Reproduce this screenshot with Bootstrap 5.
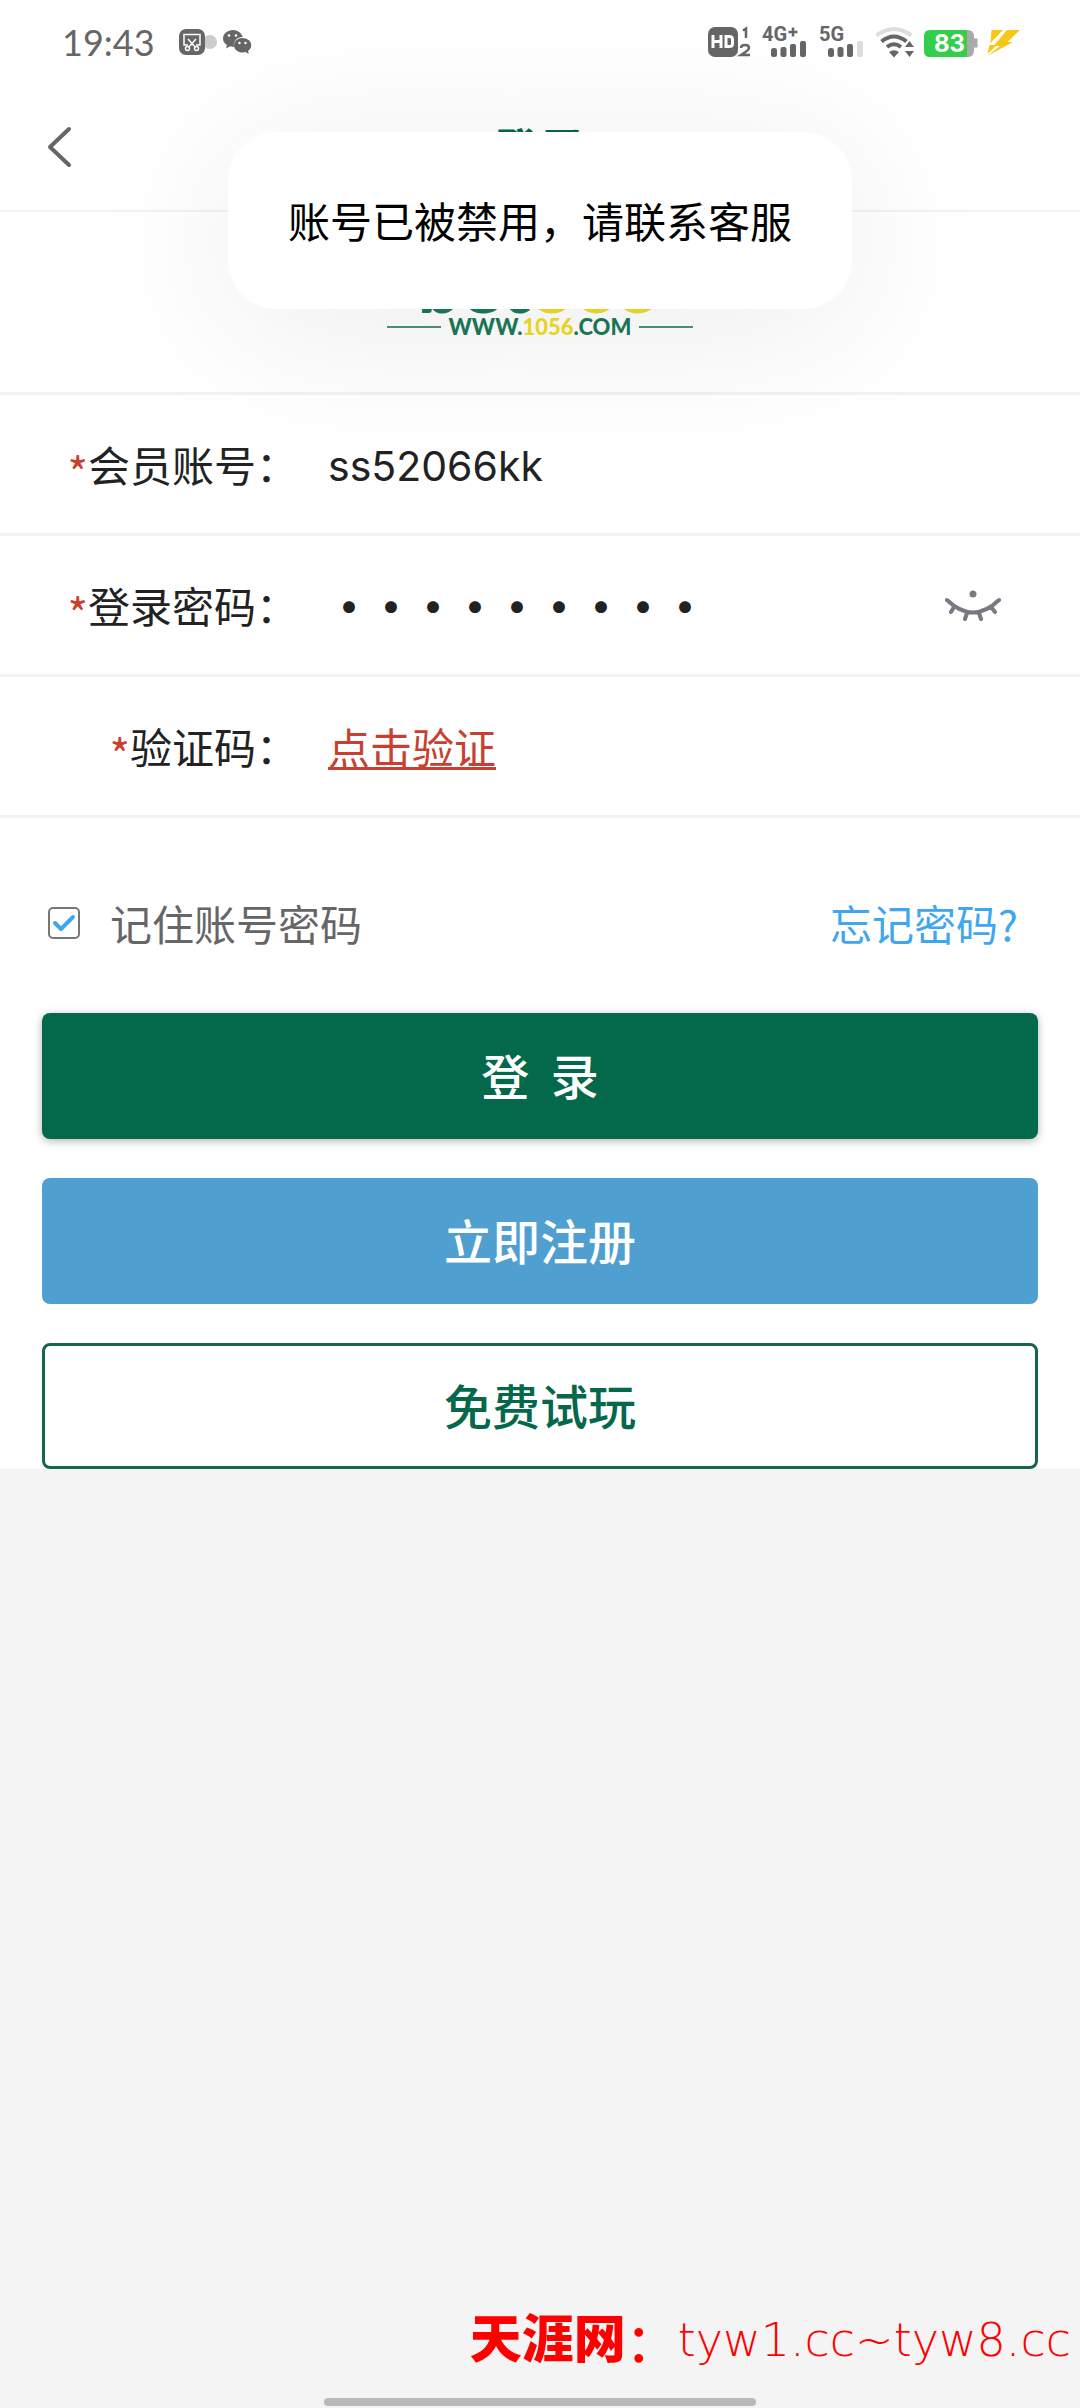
<!DOCTYPE html>
<html lang="zh-CN">
<head>
<meta charset="utf-8">
<meta name="viewport" content="width=device-width, initial-scale=1">
<title>登录</title>
<link href="https://cdn.jsdelivr.net/npm/bootstrap@5.3.0/dist/css/bootstrap.min.css" rel="stylesheet">
<style>
  :root { --brand: #04684a; --line: #f2f2f2; --muted: #666; }
  body { font-family: "Noto Sans CJK SC", sans-serif; font-size: 42px; line-height: 60px; color: #222; background: #f4f4f4; }
  .status-bar { height: 84px; padding: 0 60px 0 62px; }
  .status-left { gap: 20px; }
  .clock { font-family: Lato, sans-serif; font-size: 36px; line-height: 40px; color: var(--muted); }
  .title-bar { height: 128px; border-bottom: 2px solid var(--line); }
  .title-bar h1 { font-size: 46px; line-height: 60px; color: var(--brand); }
  .back-btn { left: 40px; top: 36px; width: 40px; height: 54px; line-height: 0; }
  .brand-block { height: 183px; border-bottom: 3px solid var(--line); font-family: Lato, sans-serif; font-weight: 900; color: #1b7a58; }
  .brand-name { font-size: 76px; line-height: 60px; padding-top: 42px; }
  .brand-url { font-size: 22px; line-height: 26px; }
  .brand-url::before, .brand-url::after { content: ""; width: 54px; height: 2px; background: #4c9478; }
  .gold { color: #f0dc28; }
  .field-row { height: 141px; border-bottom: 3px solid var(--line); }
  .field-label { width: 328px; padding-right: 30px; }
  .star { color: #c8402f; font-size: 44px; line-height: 0; vertical-align: -8px; }
  .field-input { font-size: 42px; line-height: 60px; color: #222; min-width: 0; }
  .field-input:focus { box-shadow: none; }
  .latin { font-family: Inter, sans-serif; font-size: 41px; line-height: 66px; height: 66px; margin-top: 4px; }
  .dots { font-weight: 900; }
  .verify-link { color: #c8402f; text-underline-offset: 3px; text-decoration-thickness: 3px; }
  .eye-btn { margin-right: 78px; line-height: 0; }
  .options { padding: 75px 62px 60px 48px; }
  .remember { color: var(--muted); gap: 30px; }
  .remember .form-check-input { width: 32px; height: 32px; border: 2px solid #777; border-radius: 5px; }
  .remember .form-check-input:checked { background-color: #fff; background-size: 30px 30px;
    background-image: url("data:image/svg+xml,%3csvg xmlns='http://www.w3.org/2000/svg' viewBox='0 0 30 30'%3e%3cpath fill='none' stroke='%233fa5ec' stroke-width='4' stroke-linecap='round' stroke-linejoin='round' d='m6 15 6 6 12-12'/%3e%3c/svg%3e"); }
  .forgot { color: #3fa7ee; }
  .actions { padding: 0 42px; gap: 39px; }
  .action-btn { height: 126px; font-size: 48px; line-height: 60px; font-weight: 500; border-radius: 8px; padding: 0 12px 4px; }
  .btn-login { --bs-btn-color: #fff; --bs-btn-bg: var(--brand); box-shadow: 0 2px 8px rgba(0,0,0,.3); }
  .btn-register { --bs-btn-color: #fff; --bs-btn-bg: #4fa0d0; }
  .btn-trial { --bs-btn-color: var(--brand); --bs-btn-bg: #fff; border: 3px solid #186549; }
  .notice { top: 132px; width: 624px; padding: 58px 20px 59px; border-radius: 48px; background: #fff; color: #000; box-shadow: 0 20px 160px rgba(0,0,0,.08); }
  .watermark { color: #f00; padding: 0 9px 24px 0; }
  .watermark .wm-name { font-weight: 900; font-size: 52px; padding-bottom: 8px; }
  .watermark .wm-colon { font-weight: 500; font-size: 52px; }
  .watermark .wm-url { font-family: "DejaVu Sans", sans-serif; font-weight: 200; font-size: 46px; }
  .home-bar { width: 40%; height: 8px; background: #b9b9b9; margin-bottom: 2px; }
</style>
<script src="https://cdn.jsdelivr.net/npm/bootstrap@5.3.0/dist/js/bootstrap.bundle.min.js"></script>
</head>
<body>
<div class="d-flex flex-column min-vh-100 position-relative">
  <main class="bg-white">
    <div class="status-bar d-flex align-items-center justify-content-between">
      <div class="status-left d-flex align-items-center">
        <span class="clock">19:43</span>
        <svg width="80" height="30" viewBox="0 0 80 30" aria-hidden="true">
          <circle cx="35" cy="15" r="7" fill="#ccc"/>
          <rect x="4" y="2" width="26" height="26" rx="7" fill="#666"/>
          <path d="M13 18H9V7.500H25V18H21M13 12l8 9M21 12l-8 9" fill="none" stroke="#fff" stroke-width="1.500"/>
          <circle cx="12.500" cy="21.500" r="2" fill="#666" stroke="#fff" stroke-width="1.500"/>
          <circle cx="21.500" cy="21.500" r="2" fill="#666" stroke="#fff" stroke-width="1.500"/>
          <path d="M58 3c-5.500 0-10 3.700-10 8.500 0 2.800 1.500 5 4 6.500l-1 3.500 4-2.200 4 .7c-1-6 3-10 8.700-10C66.500 6 62.600 3 58 3z" fill="#666"/>
          <path d="M67.500 11c-4.700 0-8.500 3-8.500 7.200s3.800 7.300 8.500 7.300l3-.5 3.300 2-.8-3c2-1.500 3.200-3.500 3.200-5.800 0-4.200-4-7.200-8.700-7.200z" fill="#666"/>
          <g fill="#fff"><circle cx="54" cy="8.500" r="1.300"/><circle cx="61" cy="8.500" r="1.300"/><circle cx="64.500" cy="16" r="1.200"/><circle cx="70.500" cy="16" r="1.200"/></g>
        </svg>
      </div>
      <div class="d-flex align-items-center gap-2">
        <svg width="46" height="32" viewBox="0 0 46 32" role="img" aria-label="HD 1 2">
          <rect x="0" y="1" width="30" height="30" rx="7" fill="#666"/>
          <path d="M5 9v13M13 9v13M5 15.500h8M18 10.500h3.500q3 0 3 3v4q0 3-3 3H18z" fill="none" stroke="#fff" stroke-width="3"/>
          <path d="M35 4.500 38 2.500V12M33 22q0-3 4-3t4 3q0 2-8 7h9" fill="none" stroke="#666" stroke-width="2.500"/>
        </svg>
        <svg width="49" height="44" viewBox="0 -6 49 44" font-family="Roboto, sans-serif" font-weight="700" fill="#666">
          <text x="0" y="15" font-size="20">4G</text>
          <path d="M31 1.500v9M26.500 6h9" stroke="#666" stroke-width="2.500"/>
          <rect x="9" y="22" width="6" height="9" rx="2.500"/><rect x="18.500" y="21" width="6" height="10" rx="2"/><rect x="28" y="18" width="6" height="13" rx="2"/><rect x="38" y="15" width="6" height="16" rx="2"/>
        </svg>
        <svg width="48" height="44" viewBox="0 -6 48 44" font-family="Roboto, sans-serif" font-weight="700" fill="#666">
          <text x="0" y="15" font-size="20">5G</text>
          <rect x="9" y="22" width="6" height="9" rx="2.500"/><rect x="18.500" y="21" width="6" height="10" rx="2"/><rect x="28" y="18" width="6" height="13" rx="2"/><rect x="38" y="15" width="6" height="16" rx="2" fill="#ddd"/>
        </svg>
        <svg width="41" height="32" viewBox="0 0 41 32" fill="none" stroke-width="4">
          <path d="M1.500 9.500Q19 -3.500 36.500 9.500" stroke="#ddd"/>
          <path d="M6.500 15.500Q19 5.500 31.500 15.500M12 21Q19 15.500 26 21" stroke="#666"/>
          <path d="M14 26q5-3.500 10 0l-5 5.500zM30 21l4.500-6L39 21zM30 25h9l-4.500 6z" fill="#666"/>
        </svg>
        <svg width="54" height="32" viewBox="0 0 54 32" role="img" aria-label="83%">
          <path d="M43 4h1q6 0 6 7v1.500h3.500v9H50V24q0 7-6 7h-1z" fill="#aaa"/>
          <path d="M6 4H43V31H6q-6 0-6-6V10q0-6 6-6z" fill="#33cf4b"/>
          <text x="10" y="26" font-family="Inter, sans-serif" font-size="24" font-weight="700" fill="#fff">83</text>
        </svg>
        <svg width="34" height="32" viewBox="0 0 34 32" aria-hidden="true" fill="#f8c614">
          <path d="M5.500 4H17L4.500 17z"/>
          <path d="M21 4H34L21.500 16H27L1 30 14 20H7.500z"/>
          <path d="M3.500 19H11L1.500 28z"/>
        </svg>
      </div>
    </div>

    <header class="title-bar d-flex align-items-center justify-content-center position-relative">
      <button class="back-btn btn p-0 border-0 position-absolute" type="button" aria-label="返回">
        <svg width="40" height="54" viewBox="0 0 40 54"><path d="M29 9 10 27 29 45" fill="none" stroke="#666" stroke-width="4" stroke-linecap="round" stroke-linejoin="round"/></svg>
      </button>
      <h1 class="m-0 fw-bold">登录</h1>
    </header>

    <div class="brand-block text-center">
      <div class="brand-name">bet<span class="gold">365</span></div>
      <div class="brand-url d-flex justify-content-center align-items-center gap-2"><span>WWW.<span class="gold">1056</span>.COM</span></div>
    </div>

    <form>
      <div class="field-row d-flex align-items-center">
        <label class="field-label flex-shrink-0 text-end" for="account"><span class="star">*</span>会员账号：</label>
        <input class="field-input latin form-control-plaintext p-0 flex-fill w-auto" id="account" type="text" value="ss52066kk">
      </div>
      <div class="field-row d-flex align-items-center">
        <label class="field-label flex-shrink-0 text-end" for="password"><span class="star">*</span>登录密码：</label>
        <input class="field-input dots form-control-plaintext p-0 flex-fill w-auto" id="password" type="password" value="123456789">
        <button class="eye-btn btn p-0 border-0 flex-shrink-0" type="button" aria-label="显示密码">
          <svg width="58" height="34" viewBox="0 0 58 34" fill="none" stroke="#777983" stroke-width="4" stroke-linecap="round">
            <circle cx="29" cy="6" r="3.500" fill="#777983" stroke="none"/>
            <path d="M3 12Q29 37 55 12M10 19l-3 5M23 25l-2 6M35 25l2 6M47 19l4 5"/>
          </svg>
        </button>
      </div>
      <div class="field-row d-flex align-items-center">
        <span class="field-label flex-shrink-0 text-end"><span class="star">*</span>验证码：</span>
        <a class="verify-link" href="#">点击验证</a>
      </div>

      <div class="options d-flex align-items-center justify-content-between">
        <div class="remember d-flex align-items-center">
          <input class="form-check-input m-0" id="remember" type="checkbox" checked>
          <label for="remember">记住账号密码</label>
        </div>
        <a class="forgot text-decoration-none" href="#">忘记密码?</a>
      </div>

      <div class="actions d-flex flex-column">
        <button class="action-btn btn btn-login border-0" type="button">登&nbsp;&nbsp;录</button>
        <button class="action-btn btn btn-register border-0" type="button">立即注册</button>
        <button class="action-btn btn btn-trial" type="button">免费试玩</button>
      </div>
    </form>
  </main>

  <footer class="mt-auto">
    <div class="watermark d-flex justify-content-end align-items-center">
      <span class="wm-name">天涯网</span><span class="wm-colon">：</span><span class="wm-url">tyw1.cc~tyw8.cc</span>
    </div>
    <div class="home-bar rounded-pill mx-auto"></div>
  </footer>

  <div class="notice position-absolute start-50 translate-middle-x text-center" role="alert">账号已被禁用，请联系客服</div>
</div>
</body>
</html>
